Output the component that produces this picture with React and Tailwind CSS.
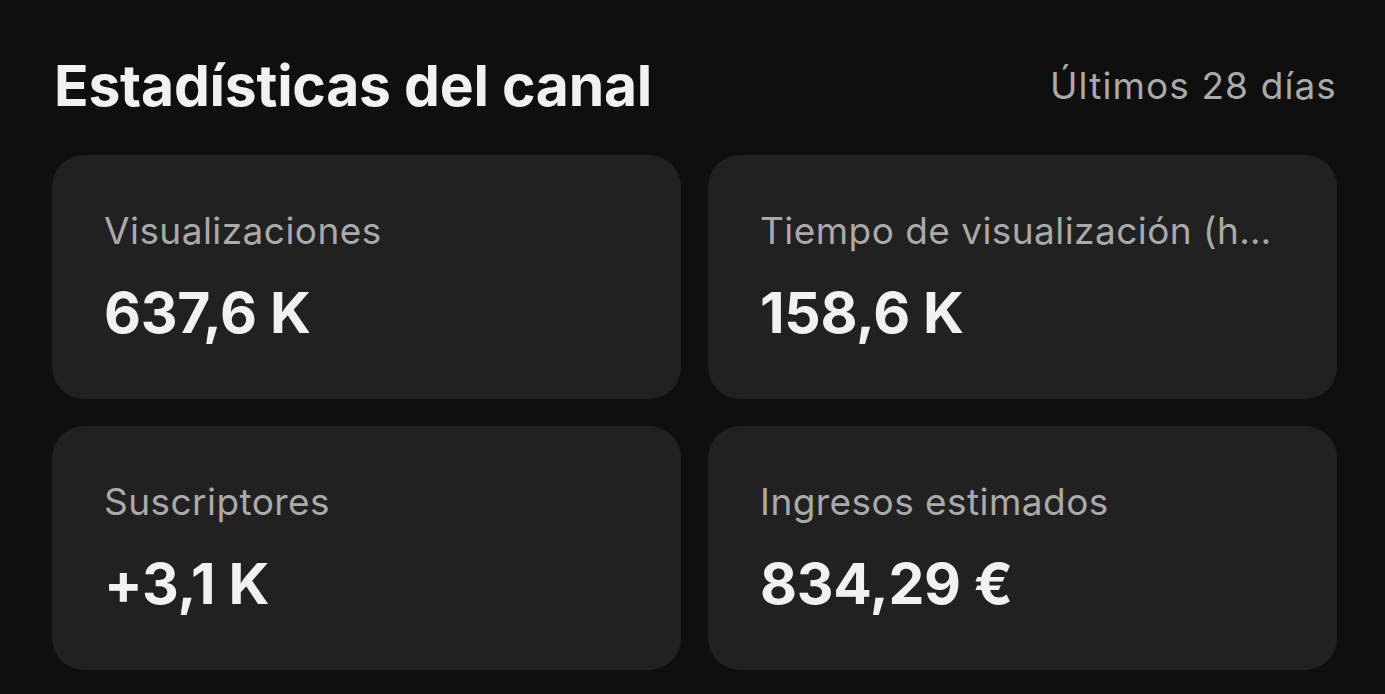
const stats = [
  { label: "Visualizaciones", value: "637,6 K" },
  { label: "Tiempo de visualización (horas)", value: "158,6 K" },
  { label: "Suscriptores", value: "+3,1 K" },
  { label: "Ingresos estimados", value: "834,29 €" },
];

function StatCard({ label, value }) {
  return (
    <div className="flex h-[244px] min-w-0 flex-col rounded-[32px] bg-[#212121] pl-[52px] pr-[56px] pt-[52px]">
      <div className="truncate text-[37px] leading-[48px] tracking-[0.012em] text-[#aaaaaa]">
        {label}
      </div>
      <div className="mt-[26px] text-[57px] font-bold leading-[64px] tracking-[-0.005em] text-[#f1f1f1]">
        {value}
      </div>
    </div>
  );
}

export default function App() {
  return (
    <div
      className="h-[694px] w-full bg-[#0f0f0f] pl-[52px] pr-[48px] pt-[50px]"
      style={{ fontFamily: "Inter, 'Noto Sans', sans-serif" }}
    >
      <div className="flex h-[70px] items-center justify-between">
        <h1 className="pl-[2px] text-[57px] font-bold leading-none tracking-[-0.004em] text-[#f1f1f1]">
          Estadísticas del canal
        </h1>
        <span className="text-[37px] leading-none tracking-[0.03em] text-[#aaaaaa]">
          Últimos 28 días
        </span>
      </div>

      <div className="mt-[35px] grid grid-cols-2 gap-[27px]">
        {stats.map((s) => (
          <StatCard key={s.label} label={s.label} value={s.value} />
        ))}
      </div>
    </div>
  );
}
